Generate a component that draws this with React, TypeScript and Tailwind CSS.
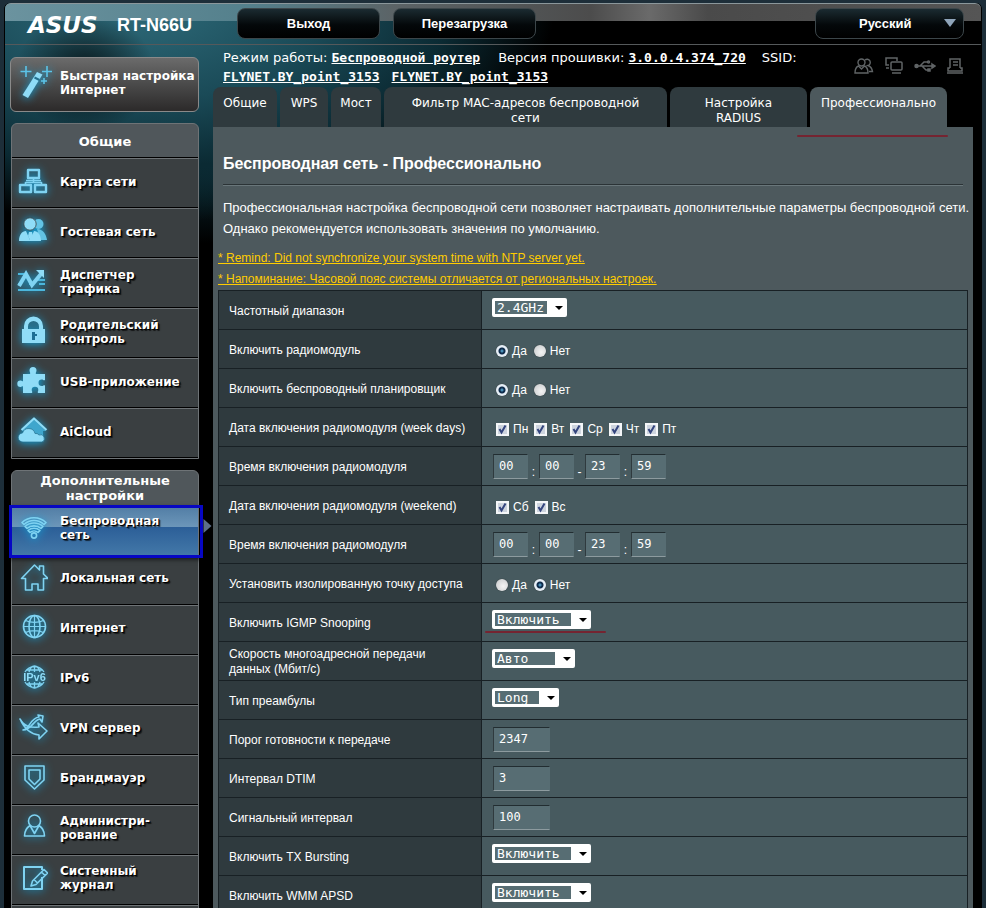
import type { ReactNode } from "react";

const GLOW = "drop-shadow-[0_1px_4px_#12a4dc]";

function Icon({ children, filled = false }: { children: ReactNode; filled?: boolean }) {
  return (
    <svg
      aria-hidden="true"
      viewBox="0 0 32 32"
      className={"h-8 w-8 shrink-0 [text-shadow:none] " + GLOW}
      fill={filled ? "#8fdcf7" : "none"}
      stroke={filled ? "none" : "#7fd3f2"}
      strokeWidth="1.6"
      strokeLinejoin="round"
    >
      {children}
    </svg>
  );
}

const icons: Record<string, ReactNode> = {
  map: (
    <Icon>
      <rect x="12" y="4" width="11" height="8" strokeWidth="2.4" />
      <path d="M10 14.500h15M17.500 12v5M9.500 19v-2.500h16v2.500" />
      <rect x="4" y="19" width="11" height="7" strokeWidth="2.4" />
      <rect x="19" y="19" width="11" height="7" strokeWidth="2.4" />
    </Icon>
  ),
  guest: (
    <Icon filled>
      <circle cx="22.500" cy="8" r="5" fill="#62c3e4" />
      <path d="M21 13c6 0 9 5 10 11h-7z" fill="#62c3e4" />
      <circle cx="14" cy="8" r="6.200" stroke="#3a3f41" strokeWidth=".8" />
      <path d="M3 25c0-6 3-10 7-10l4 9 4-9c4 0 7 4 7 10z" />
      <path d="M13 16h3l1 4-2.500 5-2.500-5z" />
    </Icon>
  ),
  traffic: (
    <Icon>
      <path d="M2 8h6M22 14h7M2 18h4M13 18h4M23 18h6M2 24h27" strokeWidth="2" stroke="#4bb6dc" />
      <path d="M3 20l7-12 6 11 9-11" strokeWidth="4" strokeLinejoin="miter" />
      <path d="M20 4h8v8z" fill="#8fdcf7" stroke="none" />
    </Icon>
  ),
  lock: (
    <Icon filled>
      <path d="M8 13v-3a9.500 9.500 0 0 1 19 0v3h2v14H6V13zM12 13h11v-2.500a5.500 5.500 0 0 0-11 0z" fillRule="evenodd" />
      <path d="M16 16h3v2h2v2h-2v4h-3z" fill="#1d6f94" />
    </Icon>
  ),
  puzzle: (
    <Icon filled>
      <path d="M7 8h7c.8-1-.5-2-.5-3.500a3.500 3.500 0 0 1 7 0C20.500 6 19.200 7 20 8h9v6c-1 .8-2-.5-3.200-.5a3 3 0 0 0 0 6.500c1.200 0 2.200-1.300 3.200-.5v7.500h-7c-.8-1 .3-2 .3-3a3.300 3.300 0 0 0-6.600 0c0 1 1.100 2 .3 3H7v-6.500c-1-.8-1.500.5-2.500.5a3.200 3.200 0 0 1 0-6.400c1 0 1.500 1.200 2.500.4z" />
    </Icon>
  ),
  cloud: (
    <Icon filled>
      <path d="M17 3l13 12h-3v10H14V15H6z" fill="#3fa6cd" />
      <path d="M5.500 14L18 2.500 30.500 14" fill="none" stroke="#8fdcf7" strokeWidth="2.200" />
      <path d="M7 26a4.500 4.500 0 0 1-.5-9 6.500 6.500 0 0 1 12.500.5 4 4 0 0 1 4 1.500 3.600 3.600 0 0 1 3 7z" stroke="#24708f" strokeWidth=".7" />
    </Icon>
  ),
  wifi: (
    <Icon>
      <circle cx="18" cy="23.500" r="2.600" />
      <path d="M12 18.500l2 2a6 6 0 0 1 8 0l2-2a9 9 0 0 0-12 0z" />
      <path d="M9 14.500l2 2a10.500 10.500 0 0 1 14 0l2-2a13.500 13.500 0 0 0-18 0z" />
      <path d="M6 10.500l2 2a14.500 14.500 0 0 1 20 0l2-2a17.500 17.500 0 0 0-24 0z" />
    </Icon>
  ),
  home: (
    <Icon>
      <path d="M5.500 16.500L18.500 3l5 5V4h4v8l4.500 4.500h-4.500V28H22v-6h-6v6H9.500V16.500z" />
    </Icon>
  ),
  globe: (
    <Icon>
      <circle cx="18.500" cy="14.500" r="11" />
      <ellipse cx="18.500" cy="14.500" rx="5.500" ry="11" />
      <path d="M7.500 14.500h22M18.500 3.500v22M9.500 8.500c5 2.500 13 2.500 18 0M9.500 20.500c5-2.500 13-2.500 18 0" strokeWidth="1.200" />
    </Icon>
  ),
  ipv6: (
    <Icon>
      <path d="M9 10a11 11 0 0 1 19 0M9 20a11 11 0 0 0 19 0M13 10c1-4 3-6 5.500-6s4.500 2 5.500 6M13 20c1 4 3 6 5.500 6s4.500-2 5.500-6M11 8h15M11 22h15M18.500 4v6M18.500 20v6" strokeWidth="1.300" />
      <text x="18.500" y="19" textAnchor="middle" fontSize="11" fontWeight="bold" fontFamily="Liberation Sans, sans-serif" fill="#8fdcf7" stroke="none">
        IPv6
      </text>
    </Icon>
  ),
  vpn: (
    <Icon>
      <path d="M4 7c4 7 9 9 19 8l-1-4 9 8-8 8v-4C14 22 8 16 4 7z" />
      <path d="M7 18c7-1 7-12 16-13l-1-2 5 1-1 6-2-3c-7 1-8 11-17 11z" />
    </Icon>
  ),
  shield: (
    <Icon>
      <path d="M9 4h19v14l-9.500 9L9 18z" />
      <path d="M13 8h11v9l-5.500 5.500L13 17z" />
    </Icon>
  ),
  admin: (
    <Icon>
      <circle cx="18.500" cy="9" r="6" />
      <path d="M14 13.500c-3 2-5.500 6-5.500 10.500h20c0-4.500-2.500-8.500-5.500-10.500l-4.500 8z" />
    </Icon>
  ),
  log: (
    <Icon>
      <path d="M26 15v12H8V5h18v3" strokeWidth="2" />
      <path d="M15 24l1.500-5L28 7.500l3.500 3.500L20 22.500zM25.500 10l3.500 3.500M18 17.500l3.500 3.500" />
    </Icon>
  ),
};

type Item = { icon: string; lines: string[]; active?: boolean };

const general: Item[] = [
  { icon: "map", lines: ["Карта сети"] },
  { icon: "guest", lines: ["Гостевая сеть"] },
  { icon: "traffic", lines: ["Диспетчер", "трафика"] },
  { icon: "lock", lines: ["Родительский", "контроль"] },
  { icon: "puzzle", lines: ["USB-приложение"] },
  { icon: "cloud", lines: ["AiCloud"] },
];

const advanced: Item[] = [
  { icon: "wifi", lines: ["Беспроводная", "сеть"], active: true },
  { icon: "home", lines: ["Локальная сеть"] },
  { icon: "globe", lines: ["Интернет"] },
  { icon: "ipv6", lines: ["IPv6"] },
  { icon: "vpn", lines: ["VPN сервер"] },
  { icon: "shield", lines: ["Брандмауэр"] },
  { icon: "admin", lines: ["Администри-", "рование"] },
  { icon: "log", lines: ["Системный", "журнал"] },
  { icon: "log", lines: [""] },
];

function MenuItem({ item, raised }: { item: Item; raised?: boolean }) {
  const tone = item.active
    ? "z-10 bg-[linear-gradient(#4f7ba3,#6d97ba_45%,#2c5f98_45%,#4378a8)]"
    : "border-t border-t-[#6e7376] border-b border-b-black bg-[#3a3f41]";
  return (
    <li className={"relative h-[50px] " + tone}>
      <a
        href="#menu"
        className={
          "flex h-full items-center gap-3 pl-1 text-xs leading-[14px] font-bold text-white [text-shadow:1px_1px_0_#000,2px_2px_1px_#000a] " +
          (raised ? "pb-[5px]" : "pb-[3px]")
        }
      >
        {item.lines[0] && icons[item.icon]}
        <span className="whitespace-nowrap">
          {item.lines.map((l) => (
            <span key={l} className="block">{l}</span>
          ))}
        </span>
      </a>
      {item.active && (
        <>
          <span className="absolute top-0 -right-[5px] -bottom-[3px] -left-[3px] border-[3px] border-[#0707c4] shadow-[0_2px_4px_#0008]" />
          <svg aria-hidden="true" viewBox="0 0 8 14" className="absolute top-[14px] -right-[14px] h-[14px] w-[9px]" fill="#5d6f88">
            <path d="M0 0l8 7-8 7z" />
          </svg>
        </>
      )}
    </li>
  );
}

function Menu({ title, items, tall }: { title: string; items: Item[]; tall?: boolean }) {
  return (
    <nav className="ml-px shrink-0 rounded-t-md border border-[#6e7376] bg-[#50575b] text-[13px] font-bold text-white">
      <h2 className={"mx-auto flex w-[150px] items-center justify-center text-center leading-[15px] " + (tall ? "h-[34px]" : "h-[33px] pt-[2px]")}>
        {title}
      </h2>
      <ul className={tall ? "" : "border-t border-black"}>
        {items.map((i, n) => (
          <MenuItem key={n} item={i} raised={tall} />
        ))}
      </ul>
    </nav>
  );
}

function Select({ id, width, options }: { id: string; width: string; options: string[] }) {
  return (
    <span className="relative inline-block">
      <select
        id={id}
        className={"block h-[19px] appearance-none rounded-[2px] border-y-[3px] border-r-[20px] border-l-[3px] border-white bg-[#576d73] pl-[2px] font-['DejaVu_Sans_Mono','Liberation_Mono',monospace] text-[13px] leading-[13px] text-white outline-none " + width}
      >
        {options.map((o) => (
          <option key={o}>{o}</option>
        ))}
      </select>
      <svg aria-hidden="true" viewBox="0 0 8 4" className="pointer-events-none absolute top-[8px] right-[4px] h-1 w-2" fill="#000">
        <path d="M0 0h8L4 4z" />
      </svg>
    </span>
  );
}

function YesNo({ name, yes }: { name: string; yes: boolean }) {
  return (
    <div className="flex gap-[7px] pt-[6px] pl-1">
      {["Да", "Нет"].map((t, i) => (
        <label key={t} className="flex items-center gap-1">
          <input
            type="radio"
            name={name}
            defaultChecked={yes === (i === 0)}
            className="h-3 w-3 appearance-none rounded-full bg-[radial-gradient(circle_at_60%_60%,#f4f4f4,#c4c6c8)] shadow-[0_0_1px_#222] checked:bg-[radial-gradient(circle,#4a90b8_0_1px,#0f2c4c_2px_3px,#e6eef6_4px)]"
          />
          {t}
        </label>
      ))}
    </div>
  );
}

function Days({ days }: { days: string[] }) {
  return (
    <div className="flex gap-[6px] pt-[6px] pl-1">
      {days.map((d) => (
        <label key={d} className="flex items-center gap-1">
          <span className="relative block h-[13px] w-[13px]">
            <input type="checkbox" defaultChecked className="block h-[13px] w-[13px] appearance-none border-2 border-[#f4f6f8] bg-[#cdd4de]" />
            <svg aria-hidden="true" viewBox="0 0 13 13" className="pointer-events-none absolute inset-0" fill="none" stroke="#34457e" strokeWidth="2">
              <path d="M3.500 6l2 3.500 4-7" />
            </svg>
          </span>
          {d}
        </label>
      ))}
    </div>
  );
}

const field =
  "block h-[25px] border border-[#8d9b9f] border-t-[#222d31] border-l-[#2f3a3e] border-r-[#576d73] bg-[#576d73] pl-[5px] pb-[2px] font-['DejaVu_Sans_Mono','Liberation_Mono',monospace] text-xs text-white outline-none";

function Time({ id }: { id: string }) {
  const parts = ["00", "00", "23", "59"];
  return (
    <div className="flex items-end pl-px">
      {parts.map((v, i) => (
        <span key={i} className="flex items-end">
          <input id={i === 0 ? id : undefined} aria-label={i ? "Время" : undefined} defaultValue={v} className={field + " w-[35px]"} />
          {i < 3 && <span className="w-[11px] text-center leading-[14px]">{i === 1 ? "-" : ":"}</span>}
        </span>
      ))}
    </div>
  );
}

const num = (id: string, v: string) => (
  <div className="pl-px">
    <input id={id} defaultValue={v} className={field + " w-[57px]"} />
  </div>
);

const rows: { label: string; id?: string; control: ReactNode }[] = [
  { label: "Частотный диапазон", id: "band", control: <Select id="band" width="w-[75px]" options={["2.4GHz", "5GHz"]} /> },
  { label: "Включить радиомодуль", control: <YesNo name="radio" yes /> },
  { label: "Включить беспроводный планировщик", control: <YesNo name="sched" yes /> },
  { label: "Дата включения радиомодуля (week days)", control: <Days days={["Пн", "Вт", "Ср", "Чт", "Пт"]} /> },
  { label: "Время включения радиомодуля", id: "t1", control: <Time id="t1" /> },
  { label: "Дата включения радиомодуля (weekend)", control: <Days days={["Сб", "Вс"]} /> },
  { label: "Время включения радиомодуля", id: "t2", control: <Time id="t2" /> },
  { label: "Установить изолированную точку доступа", control: <YesNo name="iso" yes={false} /> },
  {
    label: "Включить IGMP Snooping",
    id: "igmp",
    control: (
      <div className="relative">
        <Select id="igmp" width="w-[99px]" options={["Включить", "Отключить"]} />
        <span className="absolute top-[21px] -left-[7px] h-[2px] w-[121px] rounded-full bg-[#752431]" />
      </div>
    ),
  },
  { label: "Скорость многоадресной передачи данных (Мбит/с)", id: "mrate", control: <Select id="mrate" width="w-[83px]" options={["Авто"]} /> },
  { label: "Тип преамбулы", id: "pre", control: <Select id="pre" width="w-[67px]" options={["Long", "Short"]} /> },
  { label: "Порог готовности к передаче", id: "rts", control: num("rts", "2347") },
  { label: "Интервал DTIM", id: "dtim", control: num("dtim", "3") },
  { label: "Сигнальный интервал", id: "beacon", control: num("beacon", "100") },
  { label: "Включить TX Bursting", id: "burst", control: <Select id="burst" width="w-[99px]" options={["Включить", "Отключить"]} /> },
  { label: "Включить WMM APSD", id: "apsd", control: <Select id="apsd" width="w-[99px]" options={["Включить", "Отключить"]} /> },
];

const tabs = [
  { t: "Общие", w: "w-16 shrink-0" },
  { t: "WPS", w: "w-12 shrink-0" },
  { t: "Мост", w: "w-[50px] shrink-0" },
  { t: "Фильтр MAC-адресов беспроводной сети", w: "grow px-5" },
  { t: "Настройка RADIUS", w: "w-[137px] shrink-0 px-7" },
  { t: "Профессионально", w: "w-[137px] shrink-0", active: true },
];

const topButton =
  "h-[31px] rounded-lg border border-[#3c464a] bg-[linear-gradient(#1b2b31,#04080a_55%,#000)] text-[13px] font-bold text-white";
const mono = "font-['DejaVu_Sans_Mono','Liberation_Mono',monospace] font-bold underline whitespace-nowrap";

export default function App() {
  return (
    <div className="h-screen overflow-hidden bg-[#1d2e39] px-1 pt-[3px] font-['Liberation_Sans',Arial,sans-serif] text-white">
      <div className="flex h-full flex-col rounded-t-md border-x border-black bg-black bg-[radial-gradient(ellipse_70px_60px_at_80px_70px,#0009_20%,transparent),radial-gradient(ellipse_420px_220px_at_130px_0px,#2f6c7b,#1a4a57_45%,#0b2a33_75%,transparent),radial-gradient(ellipse_90px_130px_at_200px_110px,#124452,transparent)]">
        <header className="flex h-[42px] shrink-0 items-start rounded-t-md border-t border-b border-t-[#8b979b] border-b-[#55595b] bg-[linear-gradient(90deg,#6b939f,#54808c_25%,#5b6366_40%,#4c4c4c_60%,#6a6a6a_66%,#4a4a4a_72%,#555)] bg-[length:100%_17px] bg-no-repeat pt-1 pr-[17px]">
          <div className="flex w-[232px] shrink-0 items-center pt-[3px] pl-[23px]">
            <span className="w-[89px] font-['DejaVu_Sans','Liberation_Sans',sans-serif] text-[23px] leading-7 font-bold italic">ASUS</span>
            <span className="text-lg leading-7 font-bold">RT-N66U</span>
          </div>
          <div className="flex grow gap-[13px]">
            <button className={topButton + " w-[143px]"}>Выход</button>
            <button className={topButton + " w-[143px]"}>Перезагрузка</button>
          </div>
          <div className="relative">
            <select aria-label="Язык" className={topButton + " w-[149px] appearance-none pl-[43px] outline-none"}>
              <option>Русский</option>
            </select>
            <svg aria-hidden="true" viewBox="0 0 12 8" className="pointer-events-none absolute top-[11px] right-2 h-2 w-3" fill="#8fa5bb">
              <path d="M0 0h12L6 8z" />
            </svg>
          </div>
        </header>

        <div className="flex min-h-0 grow gap-[14px] pr-[8px] pl-[5px]">
          <aside className="flex w-[189px] shrink-0 flex-col gap-[11px] pt-3 font-['DejaVu_Sans','Liberation_Sans',sans-serif]">
            <button className="flex h-[55px] shrink-0 items-center gap-2 rounded-md border border-[#8a8a8a] bg-[linear-gradient(#6b6b6b,#4a4a4a_50%,#2c2a2a)] pb-1 pl-[9px] text-left text-xs leading-[14px] font-bold whitespace-nowrap text-white">
              <svg aria-hidden="true" viewBox="0 0 32 36" className={"h-9 w-8 shrink-0 " + GLOW}>
                <path d="M17 7l5.500 2.500L8 33l-5.500-3z" fill="#8fdcf7" />
                <path d="M14.500 12.500l5 2.500" stroke="#24708f" strokeWidth="2" />
                <path d="M6 1v11M.5 6.500h11M27 1v11M22 6.500h10M24 13v6M21 16h6" stroke="#5cc4e8" strokeWidth="1.600" />
              </svg>
              <span>Быстрая настройка<br />Интернет</span>
            </button>
            <Menu title="Общие" items={general} />
            <Menu title="Дополнительные настройки" items={advanced} tall />
          </aside>

          <main className="flex min-w-0 grow flex-col">
            <div className="flex h-[42px] shrink-0 items-start justify-between pt-[3px] pr-[9px] pl-[10px] font-['DejaVu_Sans','Liberation_Sans',sans-serif] text-[13px] leading-[19px]">
              <p className="max-w-[600px]">
                Режим работы: <a href="#mode" className={mono}>Беспроводной роутер</a>
                <span className="ml-[18px]">Версия прошивки: </span>
                <a href="#fw" className={mono}>3.0.0.4.374_720</a>
                <span className="ml-4">SSID: </span>
                <br />
                <a href="#s1" className={mono}>FLYNET.BY_point_3153</a>
                <a href="#s2" className={mono + " ml-3"}>FLYNET.BY_point_3153</a>
              </p>
              <div className="flex gap-[10px] pt-[9px]">
                <svg aria-hidden="true" viewBox="0 0 20 18" className="h-[18px] w-5" fill="none" stroke="#606466" strokeWidth="1.400">
                  <circle cx="7.500" cy="5.500" r="3.500" />
                  <path d="M4.500 9C2 10 1 13 1 16h13c0-3-1-6-3.500-7l-3 3zM11 3a3.200 3.200 0 1 1 3 5.500c3 1 4 3 4.500 6H15" />
                </svg>
                <svg aria-hidden="true" viewBox="0 0 20 18" className="h-[18px] w-5" fill="none" stroke="#606466" strokeWidth="1.500">
                  <path d="M5 8H2V1h11v3M2 11h3M8 16h9" />
                  <rect x="7" y="5" width="11" height="8" rx="1" />
                </svg>
                <svg aria-hidden="true" viewBox="0 0 22 18" className="h-[18px] w-[22px]" fill="none" stroke="#606466" strokeWidth="1.500">
                  <path d="M2 9h17M6 9l4-4h4M8 9l4 4h4" />
                  <circle cx="2.500" cy="9" r="1.500" fill="#606466" />
                  <circle cx="14.500" cy="5" r="1" />
                  <path d="M14 12h2v2h-2zM18 7l3 2-3 2z" fill="#606466" />
                </svg>
                <svg aria-hidden="true" viewBox="0 0 18 18" className="h-[18px] w-[18px]" fill="none" stroke="#606466" strokeWidth="1.500">
                  <path d="M4 11V2h10v9M7 5h5M7 8h5M4 11H2v3h14v-3h-2M1 16h16" />
                </svg>
              </div>
            </div>

            <div className="flex h-10 shrink-0 gap-[3px] pr-[26px] font-['DejaVu_Sans','Liberation_Sans',sans-serif] text-xs leading-[15px]">
              {tabs.map((t) => (
                <a
                  key={t.t}
                  href="#tab"
                  className={"flex justify-center rounded-t-lg pt-[9px] text-center " + t.w + (t.active ? " bg-[#4d595d]" : " bg-[#2f3a3e]")}
                >
                  {t.t}
                </a>
              ))}
            </div>

            <section className="relative grow bg-[#4d595d] pt-7 text-xs">
              <span className="absolute top-[8px] right-[25px] h-[2px] w-[151px] rounded-full bg-[#752431]" />
              <h1 className="mx-[10px] border-b border-[#2b3336] pb-[11px] text-base leading-[18px] font-bold shadow-[0_1px_0_#69767a]">
                Беспроводная сеть - Профессионально
              </h1>
              <p className="pt-3 pl-[10px] text-[13px] leading-[21px]">
                Профессиональная настройка беспроводной сети позволяет настраивать дополнительные параметры беспроводной сети.
                <br />
                Однако рекомендуется использовать значения по умолчанию.
              </p>
              <div className="flex flex-col items-start pt-[9px] pl-[5px] leading-[21px] text-[#ffcc00] underline">
                <a href="#ntp">* Remind: Did not synchronize your system time with NTP server yet.</a>
                <a href="#tz">* Напоминание: Часовой пояс системы отличается от региональных настроек.</a>
              </div>
              <div className="px-[5px]">
                <table className="w-full border-collapse border border-black">
                  <tbody>
                    {rows.map((r, i) => (
                      <tr key={i} className="h-[39px]">
                        <th scope="row" className="w-[263px] border border-[#182024] bg-[#2f3a3e] pt-[2px] pr-2 pl-[10px] text-left leading-[15px] font-normal">
                          {r.id ? <label htmlFor={r.id} className="block max-w-[220px]">{r.label}</label> : r.label}
                        </th>
                        <td className="border border-[#182024] bg-[#475a5f] pt-[7px] pl-[10px] align-top">{r.control}</td>
                      </tr>
                    ))}
                  </tbody>
                </table>
              </div>
            </section>
          </main>
        </div>
      </div>
    </div>
  );
}
